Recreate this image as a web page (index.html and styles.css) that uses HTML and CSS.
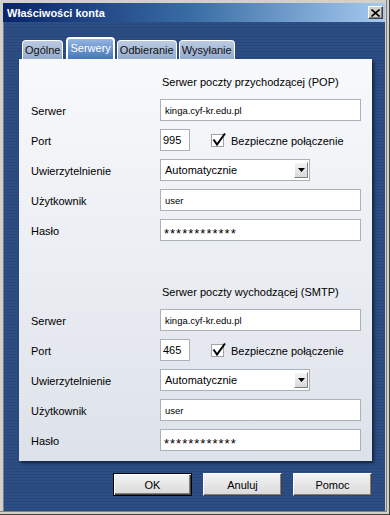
FILE: index.html
```html
<!DOCTYPE html>
<html lang="pl">
<head>
    <meta charset="UTF-8">
    <meta name="viewport" content="width=device-width, initial-scale=1.0">
    <title>Właściwości konta</title>
    <link rel="stylesheet" href="styles.css">
</head>
<body>

    <div class="window">
        <div class="titlebar">
            <span class="title">Właściwości konta</span>
            <span class="close-button">
                <svg width="9" height="8" viewBox="0 0 9 8"><path d="M0.5 0.5 L8.5 7.5 M8.5 0.5 L0.5 7.5" stroke="#000" stroke-width="1.6"/></svg>
            </span>
        </div>

        <div class="client">
            <!-- zakładki -->
            <div class="tabs">
                <span class="tab">Ogólne</span>
                <span class="tab active">Serwery</span>
                <span class="tab">Odbieranie</span>
                <span class="tab">Wysyłanie</span>
            </div>

            <div class="panel">
                <div class="section">
                    <p class="section-title">Serwer poczty przychodzącej (POP)</p>
                    <span class="label">Serwer</span>
                    <div class="field">kinga.cyf-kr.edu.pl</div>
                    <span class="label">Port</span>
                    <div class="port-row">
                        <div class="field port">995</div>
                        <svg class="checkbox" width="16" height="16" viewBox="0 0 16 16"><rect x="0.5" y="2.5" width="12" height="12" fill="#fff" stroke="#9ea3aa"/><path d="M2.5 7.5 L6 12.5 L14 1.5" fill="none" stroke="#000" stroke-width="2"/></svg>
                        <span class="check-label">Bezpieczne połączenie</span>
                    </div>
                    <span class="label">Uwierzytelnienie</span>
                    <div class="select">
                        <span>Automatycznie</span>
                        <span class="select-arrow"><svg width="7" height="4" viewBox="0 0 7 4"><path d="M0 0 H7 L3.5 4 Z" fill="#000"/></svg></span>
                    </div>
                    <span class="label">Użytkownik</span>
                    <div class="field">user</div>
                    <span class="label">Hasło</span>
                    <div class="field password">************</div>
                </div>

                <div class="section second">
                    <p class="section-title">Serwer poczty wychodzącej (SMTP)</p>
                    <span class="label">Serwer</span>
                    <div class="field">kinga.cyf-kr.edu.pl</div>
                    <span class="label">Port</span>
                    <div class="port-row">
                        <div class="field port">465</div>
                        <svg class="checkbox" width="16" height="16" viewBox="0 0 16 16"><rect x="0.5" y="2.5" width="12" height="12" fill="#fff" stroke="#9ea3aa"/><path d="M2.5 7.5 L6 12.5 L14 1.5" fill="none" stroke="#000" stroke-width="2"/></svg>
                        <span class="check-label">Bezpieczne połączenie</span>
                    </div>
                    <span class="label">Uwierzytelnienie</span>
                    <div class="select">
                        <span>Automatycznie</span>
                        <span class="select-arrow"><svg width="7" height="4" viewBox="0 0 7 4"><path d="M0 0 H7 L3.5 4 Z" fill="#000"/></svg></span>
                    </div>
                    <span class="label">Użytkownik</span>
                    <div class="field">user</div>
                    <span class="label">Hasło</span>
                    <div class="field password">************</div>
                </div>
            </div>

            <div class="buttons">
                <button class="btn default">OK</button>
                <button class="btn">Anuluj</button>
                <button class="btn">Pomoc</button>
            </div>
        </div>
    </div>

</body>
</html>
```

FILE: styles.css
```css
/* okno dialogowe w stylu klasycznym */
html, body { margin: 0; padding: 0; }
body { width: 390px; height: 515px; overflow: hidden; font-family: "Liberation Sans", Arial, sans-serif; font-size: 11px; color: #000; }

.window { box-sizing: border-box; width: 390px; height: 515px; padding: 3px 5px 4px 3px; background-color: #d4d0c8; display: flex; flex-direction: column; box-shadow: inset -1px -1px 0 #404040, inset -3px -3px 0 #d4d0c8, inset -4px -4px 0 #808080; }

.titlebar { height: 19px; flex: none; display: flex; align-items: center; justify-content: space-between; padding: 0 2px 0 4px; background: linear-gradient(to right, #0a246a, #3a6ea5 50%, #a6caf0); }
.title { color: #fff; font-weight: bold; font-size: 11px; }
.close-button { box-sizing: border-box; width: 15px; height: 13px; display: flex; align-items: center; justify-content: center; background-color: #d4d0c8; border: 1px solid; border-color: #fff #404040 #404040 #fff; box-shadow: inset -1px -1px 0 #808080; }

.client { flex: 1; padding: 15px 13px 0 15px; border-left: 1px solid #6e7f99; background: repeating-linear-gradient(to bottom, #2c4e85 0, #2c4e85 2px, #27477b 2px, #27477b 3px); }

.tabs { height: 22px; display: flex; align-items: flex-end; gap: 2px; padding-left: 3px; }
.tab { box-sizing: border-box; height: 19px; padding: 3px 2px 0 2px; border: 1px solid #fff; border-bottom: none; border-radius: 4px 4px 0 0; background: linear-gradient(to bottom, #bccbe2, #94aacc); color: #111; }
.tab.active { height: 22px; padding: 3px 2px 0 2px; border-width: 2px; border-bottom: none; margin-left: 1px; background: linear-gradient(to bottom, #93b5e2, #4676b8); color: #fff; }

.panel { box-sizing: border-box; height: 402px; padding: 16px 11px 10px 12px; background: linear-gradient(to bottom, #f8f9fb, #dde2ea); box-shadow: 2px 2px 3px rgba(0,0,0,0.55); }

.section { display: grid; grid-template-columns: 129px 1fr; grid-template-rows: 16px; grid-auto-rows: 22px; row-gap: 8px; }
.section.second { margin-top: 44px; }
.section-title { grid-column: 2; margin: 0 0 0 2px; height: 14px; line-height: 14px; align-self: start; }
.label { align-self: center; padding-top: 2px; }

.field { box-sizing: border-box; height: 22px; display: flex; align-items: center; padding: 0 4px; background-color: #fff; border: 1px solid #aab1bb; font-size: 9.5px; }
.field.password { font-size: 13px; letter-spacing: 1px; padding-top: 6px; padding-left: 3px; }
.field.port { width: 30px; flex: none; padding-left: 2px; font-size: 11px; }

.port-row { display: flex; align-items: center; }
.checkbox { margin: 0 4px 0 21px; }
.check-label { padding-top: 1px; }

.select { box-sizing: border-box; width: 150px; height: 22px; display: flex; align-items: center; justify-content: space-between; padding: 2px 1px 2px 4px; background-color: #fff; border: 1px solid #aab1bb; }
.select-arrow { box-sizing: border-box; width: 14px; height: 16px; display: flex; align-items: center; justify-content: center; background: linear-gradient(to bottom, #f4f4f4, #d8d8d8); border: 1px solid; border-color: #fff #808080 #808080 #fff; }

.buttons { display: flex; justify-content: flex-end; gap: 11px; margin-top: 12px; }
.btn { box-sizing: border-box; width: 79px; height: 23px; padding: 0; font-family: "Liberation Sans", Arial, sans-serif; font-size: 11px; color: #000; background: linear-gradient(to bottom, #f3f3f3, #d9d9d9); border: 1px solid; border-color: #fff #404040 #404040 #fff; box-shadow: inset -1px -1px 0 #808080; }
.btn.default { border: 1px solid #000; box-shadow: inset 1px 1px 0 #fff, inset -1px -1px 0 #404040, inset -2px -2px 0 #808080; }
```
